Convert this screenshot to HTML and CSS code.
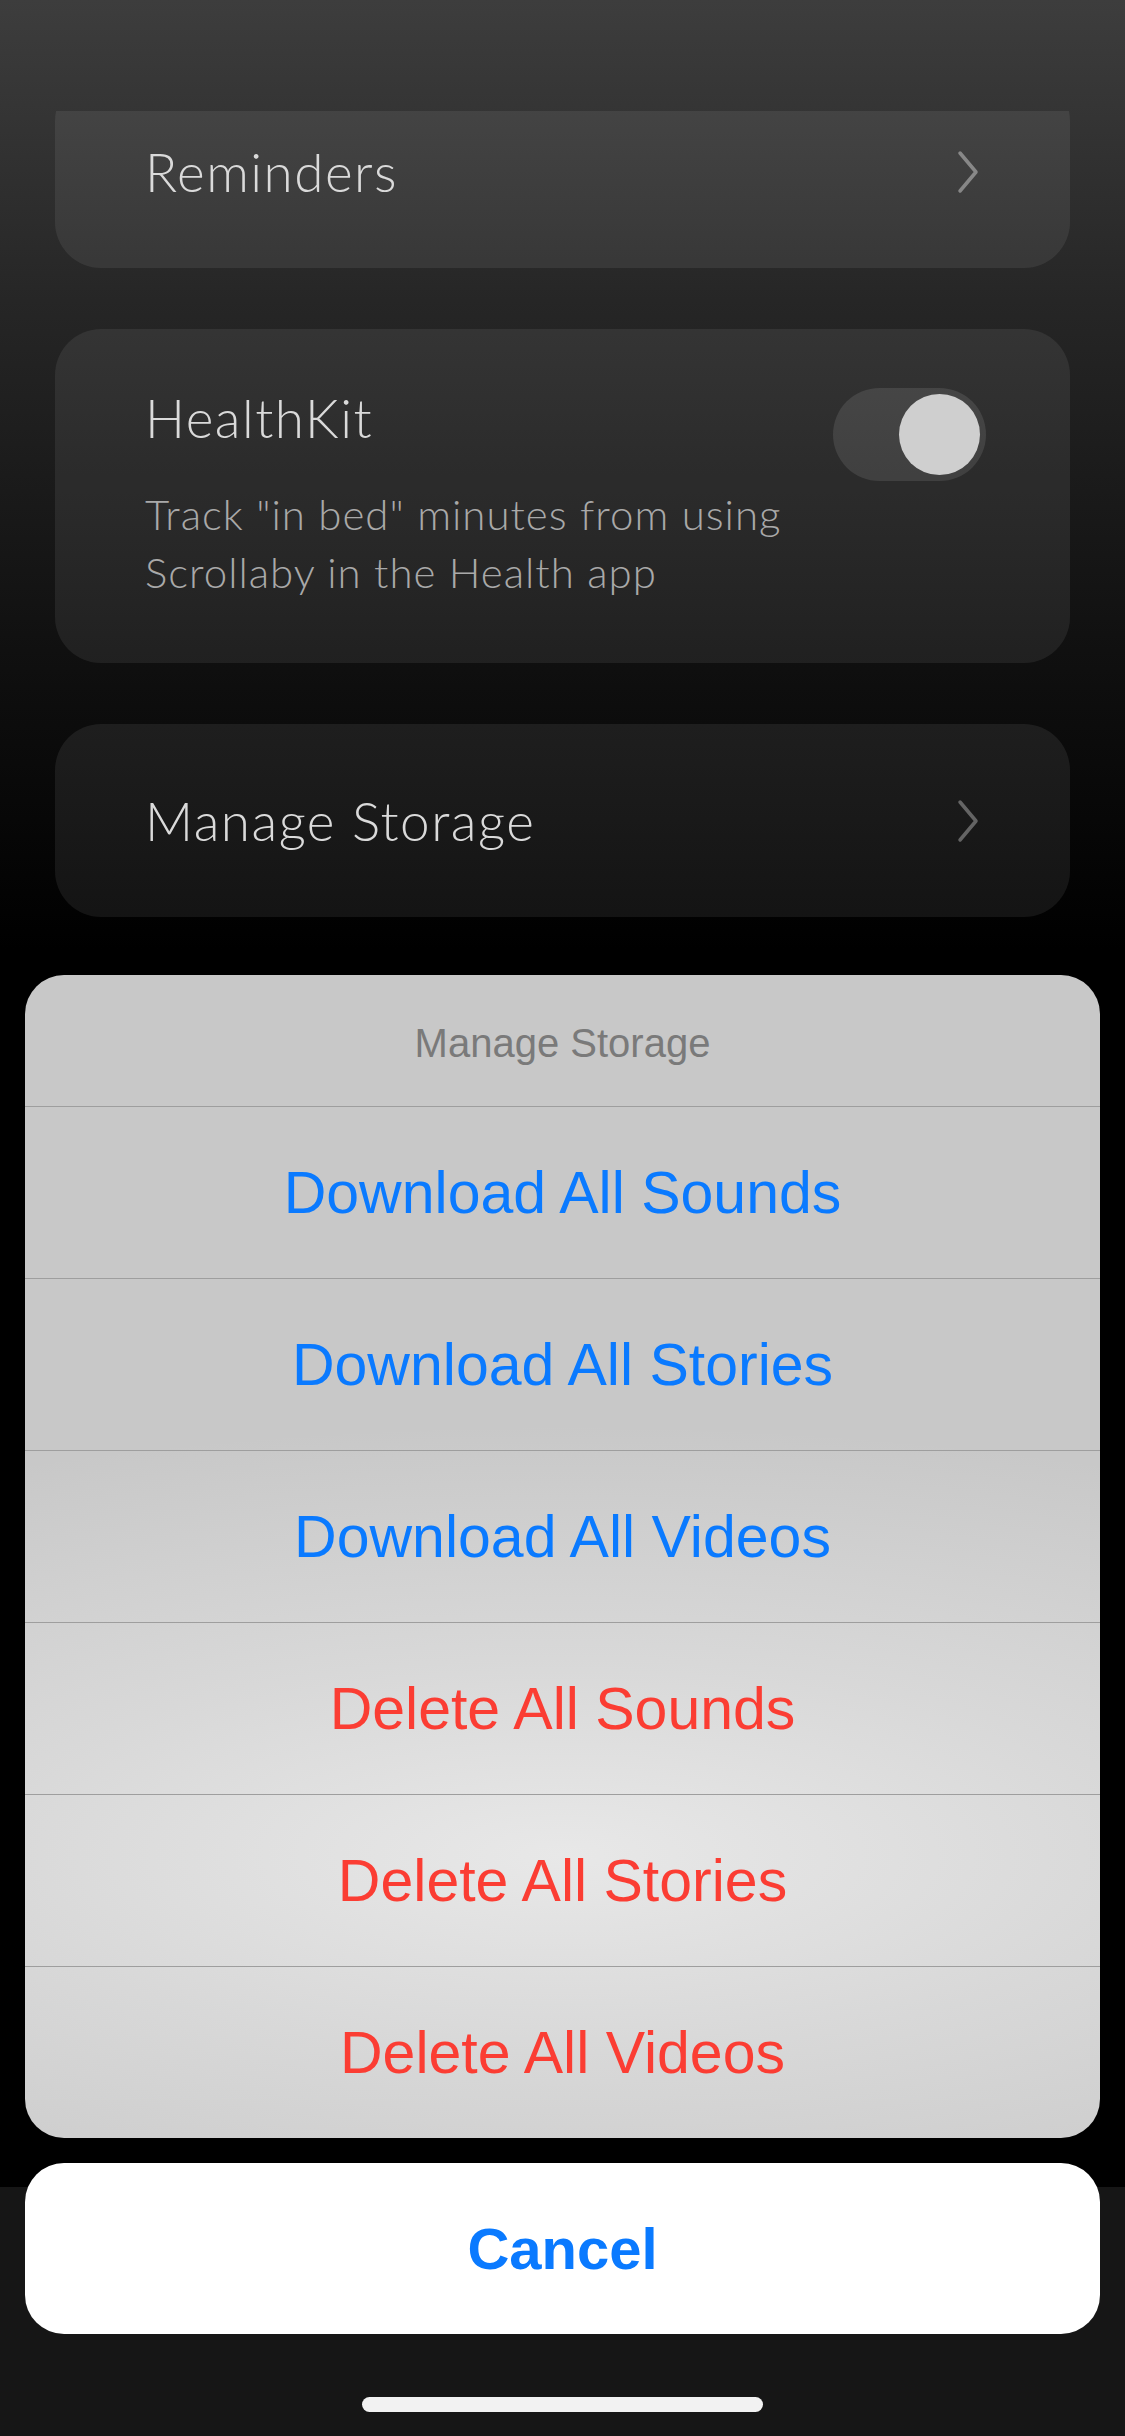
FILE: index.html
```html
<!doctype html>
<html lang="en">
	<head>
		<meta charset="utf-8">
		<title>Settings – Manage Storage</title>
		<meta name="viewport" content="width=device-width, initial-scale=1">
		<link rel="stylesheet" href="styles.css">
	</head>
	<body>
		<div class="topbar"></div>

		<main class="scroll">
			<div class="list">
				<a class="card row reminders">
					<span class="card-title">Reminders</span>
					<svg class="chevron" viewBox="0 0 22 44" width="22" height="44"><polyline points="3,3 19,22 3,41"/></svg>
				</a>

				<div class="card health">
					<div class="health-head">
						<span class="card-title">HealthKit</span>
						<span class="switch"><span class="knob"></span></span>
					</div>
					<p class="card-desc">Track "in bed" minutes from using Scrollaby in the Health app</p>
				</div>

				<a class="card row">
					<span class="card-title">Manage Storage</span>
					<svg class="chevron dim" viewBox="0 0 22 44" width="22" height="44"><polyline points="3,3 19,22 3,41"/></svg>
				</a>
			</div>
		</main>

		<div class="tabbar"></div>

		<!-- action sheet over the dimmed settings page -->
		<div class="sheet-wrap">
			<div class="sheet">
				<div class="sheet-title">Manage Storage</div>
				<button class="sheet-btn">Download All Sounds</button>
				<button class="sheet-btn">Download All Stories</button>
				<button class="sheet-btn">Download All Videos</button>
				<button class="sheet-btn danger">Delete All Sounds</button>
				<button class="sheet-btn danger">Delete All Stories</button>
				<button class="sheet-btn danger">Delete All Videos</button>
			</div>
			<button class="cancel">Cancel</button>
		</div>

		<div class="home-indicator"></div>
	</body>
</html>
```

FILE: styles.css
```css
html, body {
	margin: 0;
	padding: 0;
}

body {
	width: 1125px;
	height: 2436px;
	overflow: hidden;
	position: relative;
	display: flex;
	flex-direction: column;
	font-family: "Lato", "Open Sans", sans-serif;
	background: linear-gradient(to bottom, #3d3d3d 0px, #262626 300px, #101010 650px, #000 950px, #000 100%);
}

.topbar {
	height: 111px;
	flex: none;
}

.scroll {
	flex: 1;
	overflow: hidden;
}

.list {
	margin-top: -36px;
	display: flex;
	flex-direction: column;
	gap: 61px;
	padding: 0 55px;
}

.card {
	background: rgba(255,255,255,0.075);
	border-radius: 46px;
	color: #dadada;
	text-decoration: none;
}

.row {
	height: 193px;
	display: flex;
	align-items: center;
	justify-content: space-between;
	padding: 0 91px 0 90px;
}

.card-title {
	font-size: 53px;
	font-weight: 300;
	line-height: 62px;
	letter-spacing: 1.5px;
}

.chevron {
	fill: none;
	stroke: rgba(255,255,255,0.38);
	stroke-width: 3.5;
	stroke-linecap: round;
	stroke-linejoin: round;
}
.chevron.dim {
	stroke: rgba(255,255,255,0.33);
}

.health {
	height: 334px;
	box-sizing: border-box;
	padding: 58px 84px 0 90px;
}

.health-head {
	display: flex;
	justify-content: space-between;
	align-items: flex-start;
}

.switch {
	width: 153px;
	height: 93px;
	margin-top: 1px;
	border-radius: 47px;
	background: rgba(255,255,255,0.1);
	display: flex;
	justify-content: flex-end;
	align-items: center;
	padding-right: 6px;
	box-sizing: border-box;
}

.knob {
	width: 81px;
	height: 81px;
	border-radius: 50%;
	background: #cfcfcf;
}

.card-desc {
	margin: 4px 0 0;
	width: 720px;
	font-size: 42px;
	font-weight: 300;
	line-height: 58px;
	letter-spacing: 1px;
	color: #a9a9a9;
}

.tabbar {
	height: 249px;
	flex: none;
	background: #161616;
}

/* action sheet */
.sheet-wrap {
	position: absolute;
	left: 25px;
	right: 25px;
	bottom: 102px;
	display: flex;
	flex-direction: column;
	gap: 25px;
	font-family: "Liberation Sans", Arial, sans-serif;
}

.sheet {
	border-radius: 39px;
	overflow: hidden;
	background:
		radial-gradient(ellipse 1300px 430px at 50% 880px, rgba(232,232,232,1) 0%, rgba(225,225,225,0.65) 45%, rgba(200,200,200,0) 100%),
		#c8c8c8;
	display: flex;
	flex-direction: column;
}

.sheet-title {
	height: 131px;
	display: flex;
	align-items: center;
	justify-content: center;
	padding-top: 6px;
	box-sizing: border-box;
	font-size: 40px;
	color: #7a7a7a;
}

.sheet-btn {
	height: 172px;
	border: 0;
	border-top: 1px solid #9e9e9e;
	background: transparent;
	font-family: inherit;
	font-size: 59px;
	color: #0a7aff;
	padding: 0;
}

.sheet-btn.danger {
	color: #fb3d33;
}

.cancel {
	height: 171px;
	border: 0;
	border-radius: 39px;
	background: #fff;
	font-family: inherit;
	font-size: 58px;
	font-weight: bold;
	color: #0a7aff;
}

.home-indicator {
	position: absolute;
	left: 362px;
	bottom: 24px;
	width: 401px;
	height: 15px;
	border-radius: 8px;
	background: #f2f2f2;
}
```
